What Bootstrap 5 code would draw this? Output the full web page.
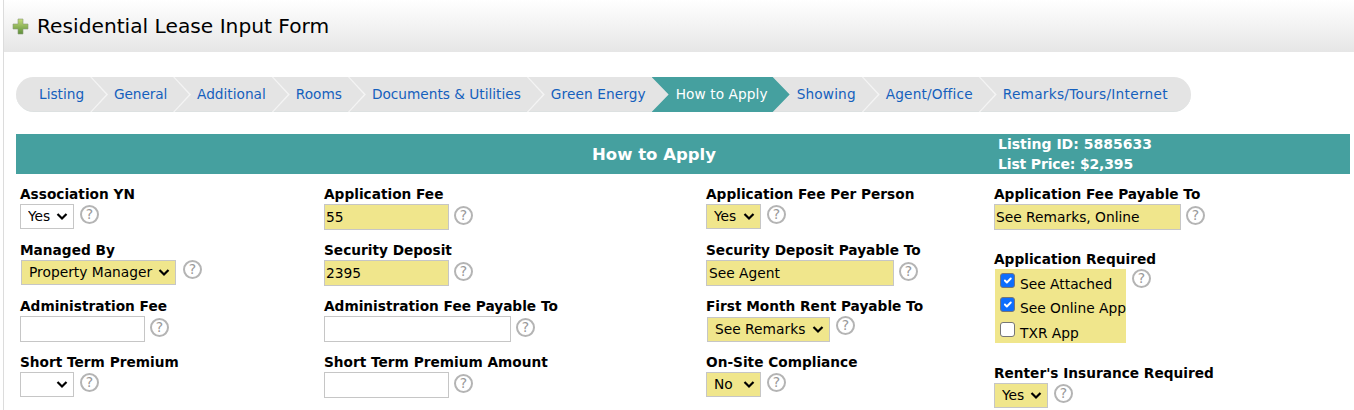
<!doctype html>
<html lang="en"><head><meta charset="utf-8"><title>Residential Lease Input Form</title>
<link href="https://cdn.jsdelivr.net/npm/bootstrap@5.3.0/dist/css/bootstrap.min.css" rel="stylesheet">
<style>
html,body{height:410px;overflow:hidden}
body{font-family:"DejaVu Sans",sans-serif;font-size:14px;color:#000;background:#fff}
.page-shell{margin-left:3px;border-left:1px solid #dcdcdc;height:410px;overflow:hidden}
.title-bar{height:52px;background:linear-gradient(#fff,#e6e6e6);padding-left:8px;gap:8px}
.title-text{font-size:20.2px;margin:0;font-weight:400}
.content-wrap{padding:25px 0 0 12px}
.crumbs{width:1175px;height:35px;background:#e4e4e4;border-bottom:1px solid #dde1e1;border-radius:18px;font-size:13.7px;margin:0}
.crumb{display:block;height:35px;line-height:34px;padding:0 6px 0 24px;color:#1560bd;text-decoration:none;position:relative;white-space:nowrap}
.crumb::after{content:"";position:absolute;top:0;left:100%;width:18px;height:35px;background:#f4f4f4;clip-path:polygon(0 0,1.5px 0,18px 17.5px,1.5px 35px,0 35px,16px 17.5px)}
.crumb-first{padding-left:23px}
.crumb-plain::after{display:none}
.crumb-on{background:#45a09f;color:#fff;padding-right:22px;margin-right:-17px;clip-path:polygon(0 0,calc(100% - 17px) 0,100% 50%,calc(100% - 17px) 100%,0 100%,17px 50%);height:35px}
.sp-tight{letter-spacing:-.14px}
.sp-a{letter-spacing:.09px}
.sp-b{letter-spacing:.14px}
.sp-c{letter-spacing:.27px}
.band{width:1334px;height:40px;margin-top:22px;background:#45a09f;color:#fff;font-weight:700}
.band-title{width:982px;padding:3px 0 0 294px;text-align:center;font-size:16.5px;flex:none}
.band-meta{font-size:14px;line-height:20px}
.price-line{letter-spacing:-.16px}
.form-cols{margin-top:11px}
.fcol{padding-left:4px}
.fcol1{width:304px}.fcol2{width:382px}.fcol3{width:288px}.fcol4{width:300px}
.field{height:56px}
.field-a{height:65px}.field-b{height:114px}
.field-label{display:block;font-weight:700;font-size:13.7px;line-height:18px;margin:0 0 1px;white-space:nowrap}
.ctl-row{gap:6px}
.ctl{height:26px;border:1px solid #c6c6c6;border-radius:0;background-color:#fff;font-size:13.8px;color:#000;padding:0 1px;box-shadow:none}
input.ctl+.help-dot{margin-left:-1px}
select.form-select.ctl{height:25px;padding:0 18px 0 7px;background-position:right 5px center;background-size:12px 9px;background-image:url("data:image/svg+xml,%3csvg xmlns='http://www.w3.org/2000/svg' viewBox='0 0 12 9'%3e%3cpath fill='none' stroke='%23000' stroke-width='2.2' d='M1.5 2l4.5 4.5L10.5 2'/%3e%3c/svg%3e")}
.is-req{background-color:#f0e68c!important}
.w-sm{width:54px}.w-md{width:125px}.w-lg{width:187px}
select.w-sm2{width:55px}
input.w-xl{width:188px;padding-left:2px}
select.w-mgd{width:155px;margin-left:1px}
select.w-mgd+.help-dot{margin:-6px 0 0 1px}
select.w-rem{width:123px;margin:1px 0 0 1px}
select.w-rem+.help-dot{margin-top:-7px}
.help-dot{width:19px;height:19px;border:2px solid #b4b4b4;border-radius:50%;color:#999;font-size:14px;line-height:15px;text-align:center;flex:none;margin-top:-4px}
.check-box{background:#f0e68c;width:131px;height:74px;margin-left:1px;padding:2px 0 0 5px;font-size:13.8px}
.check-line{height:24.5px;gap:5px;white-space:nowrap}
.check-line span{margin-top:1.5px}
.check-line .form-check-input{width:15px;height:15px;margin:0 0 6px;border-color:#767676;border-radius:3px;flex:none}
.chk-help{margin-top:0}
</style></head><body>
<div class="page-shell">
<div class="title-bar d-flex align-items-center">
<svg width="17" height="17" viewBox="0 0 17 17" aria-hidden="true"><defs><linearGradient id="pg" x1="0" y1="0" x2="0" y2="1"><stop offset="0" stop-color="#c5dc7a"/><stop offset="1" stop-color="#5d8f3a"/></linearGradient></defs><path d="M6 1h5v5h5v5h-5v5H6v-5H1V6h5z" fill="url(#pg)" stroke="#8a9a7a" stroke-width=".6"/></svg>
<h1 class="title-text">Residential Lease Input Form</h1></div>
<div class="content-wrap">
<ul class="crumbs list-unstyled d-flex">
<li><a class="crumb crumb-first" href="#">Listing</a></li>
<li><a class="crumb sp-tight" href="#">General</a></li>
<li><a class="crumb" href="#">Additional</a></li>
<li><a class="crumb" href="#">Rooms</a></li>
<li><a class="crumb" href="#">Documents &amp; Utilities</a></li>
<li><a class="crumb crumb-plain sp-a" href="#">Green Energy</a></li>
<li><a class="crumb crumb-on crumb-plain sp-a" href="#">How to Apply</a></li>
<li><a class="crumb sp-b" href="#">Showing</a></li>
<li><a class="crumb sp-b" href="#">Agent/Office</a></li>
<li><a class="crumb crumb-plain sp-c" href="#">Remarks/Tours/Internet</a></li>
</ul>
<div class="band d-flex align-items-center">
<div class="band-title">How to Apply</div>
<div class="band-meta"><div>Listing ID: 5885633</div><div class="price-line">List Price: $2,395</div></div>
</div>
<div class="form-cols d-flex">
<div class="fcol fcol1">
<div class="field"><label class="field-label">Association YN</label><div class="ctl-row d-flex align-items-center"><select class="form-select ctl w-sm"><option>Yes</option></select><span class="help-dot">?</span></div></div>
<div class="field"><label class="field-label">Managed By</label><div class="ctl-row d-flex align-items-center"><select class="form-select ctl is-req w-mgd"><option>Property Manager</option></select><span class="help-dot">?</span></div></div>
<div class="field"><label class="field-label">Administration Fee</label><div class="ctl-row d-flex align-items-center"><input class="ctl w-md"><span class="help-dot">?</span></div></div>
<div class="field"><label class="field-label">Short Term Premium</label><div class="ctl-row d-flex align-items-center"><select class="form-select ctl w-sm"><option></option></select><span class="help-dot">?</span></div></div>
</div>
<div class="fcol fcol2">
<div class="field"><label class="field-label">Application Fee</label><div class="ctl-row d-flex align-items-center"><input class="ctl w-md is-req" value="55"><span class="help-dot">?</span></div></div>
<div class="field"><label class="field-label">Security Deposit</label><div class="ctl-row d-flex align-items-center"><input class="ctl w-md is-req" value="2395"><span class="help-dot">?</span></div></div>
<div class="field"><label class="field-label">Administration Fee Payable To</label><div class="ctl-row d-flex align-items-center"><input class="ctl w-lg"><span class="help-dot">?</span></div></div>
<div class="field"><label class="field-label">Short Term Premium Amount</label><div class="ctl-row d-flex align-items-center"><input class="ctl w-md"><span class="help-dot">?</span></div></div>
</div>
<div class="fcol fcol3">
<div class="field"><label class="field-label">Application Fee Per Person</label><div class="ctl-row d-flex align-items-center"><select class="form-select ctl w-sm2 is-req"><option>Yes</option></select><span class="help-dot">?</span></div></div>
<div class="field"><label class="field-label">Security Deposit Payable To</label><div class="ctl-row d-flex align-items-center"><input class="ctl w-xl is-req" value="See Agent"><span class="help-dot">?</span></div></div>
<div class="field"><label class="field-label">First Month Rent Payable To</label><div class="ctl-row d-flex align-items-center"><select class="form-select ctl is-req w-rem"><option>See Remarks</option></select><span class="help-dot">?</span></div></div>
<div class="field"><label class="field-label">On-Site Compliance</label><div class="ctl-row d-flex align-items-center"><select class="form-select ctl w-sm2 is-req"><option>No</option></select><span class="help-dot">?</span></div></div>
</div>
<div class="fcol fcol4">
<div class="field field-a"><label class="field-label">Application Fee Payable To</label><div class="ctl-row d-flex align-items-center"><input class="ctl w-lg is-req" value="See Remarks, Online"><span class="help-dot">?</span></div></div>
<div class="field field-b"><label class="field-label">Application Required</label><div class="d-flex ctl-row align-items-start"><div class="check-box">
<div class="check-line d-flex align-items-center"><input type="checkbox" class="form-check-input" checked><span>See Attached</span></div>
<div class="check-line d-flex align-items-center"><input type="checkbox" class="form-check-input" checked><span>See Online App</span></div>
<div class="check-line d-flex align-items-center"><input type="checkbox" class="form-check-input"><span>TXR App</span></div>
</div><span class="help-dot chk-help">?</span></div></div>
<div class="field"><label class="field-label">Renter's Insurance Required</label><div class="ctl-row d-flex align-items-center"><select class="form-select ctl w-sm is-req"><option>Yes</option></select><span class="help-dot">?</span></div></div>
</div>
</div>
</div>
</div>
<script src="https://cdn.jsdelivr.net/npm/bootstrap@5.3.0/dist/js/bootstrap.bundle.min.js"></script>
</body></html>
